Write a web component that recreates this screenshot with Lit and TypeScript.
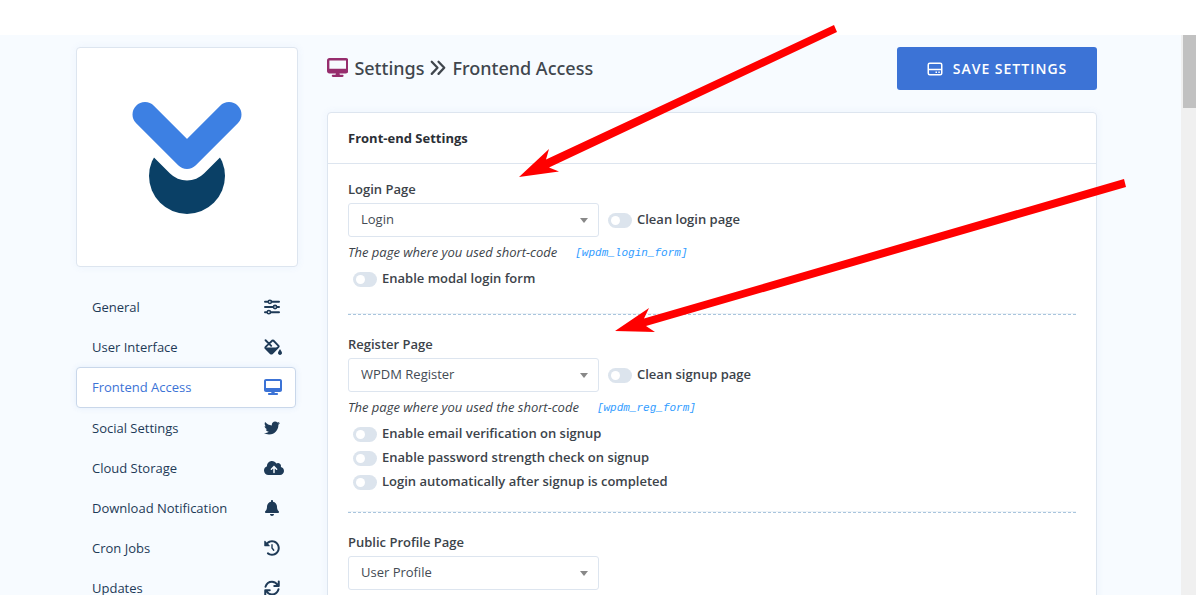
import { LitElement, html, css, svg, nothing } from "lit";
import { customElement, property } from "lit/decorators.js";

const desktop = svg`<path d="M64 0C28.7 0 0 28.7 0 64V352c0 35.3 28.7 64 64 64H240l-10.7 32H160c-17.7 0-32 14.3-32 32s14.3 32 32 32H416c17.7 0 32-14.3 32-32s-14.3-32-32-32H346.7L336 416H512c35.3 0 64-28.7 64-64V64c0-35.3-28.7-64-64-64H64zM512 64V288H64V64H512z"/>`;

const icons: Record<string, { box: string; shape: unknown }> = {
  sliders: {
    box: "0 0 512 512",
    shape: svg`<g fill="none" stroke="currentColor" stroke-width="64" stroke-linecap="round">
      <path d="M32 90H130M246 90H480M32 256H296M412 256H480M32 422H98M214 422H480"/>
      <circle cx="188" cy="90" r="52" stroke-width="50"/><circle cx="354" cy="256" r="52" stroke-width="50"/><circle cx="156" cy="422" r="52" stroke-width="50"/></g>`,
  },
  fill: {
    box: "0 0 576 512",
    shape: svg`<path d="M50 40L230 220M130 180L268 50Q284 38 300 50L464 218Q478 234 464 250L262 456Q236 480 210 456L54 300Q32 276 54 252L110 196" fill="none" stroke="currentColor" stroke-width="60" stroke-linecap="round"/>
      <path d="M40 272H460L262 468Q236 490 210 468L48 306zM512 320c-22 36-64 94-64 130 0 34 28 62 64 62s64-28 64-62c0-36-42-94-64-130z"/>`,
  },
  desktop: { box: "0 0 576 512", shape: desktop },
  twitter: {
    box: "0 0 512 512",
    shape: svg`<path d="M459.37 151.716c.325 4.548.325 9.097.325 13.645 0 138.72-105.583 298.558-298.558 298.558-59.452 0-114.68-17.219-161.137-47.106 8.447.974 16.568 1.299 25.34 1.299 49.055 0 94.213-16.568 130.274-44.832-46.132-.975-84.792-31.188-98.112-72.772 6.498.974 12.995 1.624 19.818 1.624 9.421 0 18.843-1.3 27.614-3.573-48.081-9.747-84.143-51.98-84.143-102.985v-1.299c13.969 7.797 30.214 12.67 47.431 13.319-28.264-18.843-46.781-51.005-46.781-87.391 0-19.492 5.197-37.36 14.294-52.954 51.655 63.675 129.3 105.258 216.365 109.807-1.624-7.797-2.599-15.918-2.599-24.04 0-57.828 46.782-104.934 104.934-104.934 30.213 0 57.502 12.67 76.67 33.137 23.715-4.548 46.456-13.32 66.599-25.34-7.798 24.366-24.366 44.833-46.132 57.827 21.117-2.273 41.584-8.122 60.426-16.243-14.292 20.791-32.161 39.308-52.628 54.253z"/>`,
  },
  cloud: {
    box: "0 0 640 512",
    shape: svg`<path d="M537.6 226.6c4.1-10.7 6.4-22.4 6.4-34.6 0-53-43-96-96-96-19.7 0-38.1 6-53.3 16.2C367 64.2 315.3 32 256 32c-88.4 0-160 71.6-160 160 0 2.7.1 5.4.2 8.1C40.2 219.8 0 273.2 0 336c0 79.5 64.5 144 144 144h368c70.7 0 128-57.3 128-128 0-61.9-44-113.6-102.4-125.4z"/>
      <path d="M320 400V220M236 294L320 210L404 294" fill="none" stroke="#f7fbff" stroke-width="48" stroke-linecap="round"/>`,
  },
  bell: {
    box: "-32 0 512 512",
    shape: svg`<path d="M224 512c35.32 0 63.97-28.65 63.97-64H160.03c0 35.35 28.65 64 63.97 64zm215.39-149.71c-19.32-20.76-55.47-51.99-55.47-154.29 0-77.7-54.48-139.9-127.94-155.16V32c0-17.67-14.32-32-31.98-32s-31.98 14.33-31.98 32v20.84C118.56 68.1 64.08 130.3 64.08 208c0 102.3-36.15 133.53-55.47 154.29-6 6.45-8.66 14.16-8.61 21.71.11 16.4 12.98 32 32.1 32h383.8c19.12 0 32-15.6 32.1-32 .05-7.55-2.61-15.27-8.61-21.71z"/>`,
  },
  history: {
    box: "0 0 512 512",
    shape: svg`<path d="M504 255.531c.253 136.64-111.18 248.372-247.82 248.468-59.015.042-113.223-20.53-155.822-54.911-11.077-8.94-11.905-25.541-1.839-35.607l11.267-11.267c8.609-8.609 22.353-9.551 31.891-1.984C173.062 425.135 212.781 440 256 440c101.705 0 184-82.311 184-184 0-101.705-82.311-184-184-184-48.814 0-93.149 18.969-126.068 49.932l50.754 50.754c10.08 10.08 2.941 27.314-11.313 27.314H24c-8.837 0-16-7.163-16-16V38.627c0-14.254 17.234-21.393 27.314-11.314l49.372 49.372C129.209 34.136 189.552 8 256 8c136.81 0 247.747 110.78 248 247.531z"/>
      <path d="M256 152V256L312 328" fill="none" stroke="currentColor" stroke-width="44" stroke-linecap="round" stroke-linejoin="round"/>`,
  },
  sync: {
    box: "0 0 512 512",
    shape: svg`<g fill="none" stroke="currentColor" stroke-width="64" stroke-linecap="round" stroke-linejoin="round">
      <path d="M48 216C80 110 160 52 256 52C330 52 390 84 440 160M472 44V188H328"/>
      <path d="M464 296C432 402 352 460 256 460C182 460 122 428 72 352M40 468V324H184"/></g>`,
  },
  angles: {
    box: "0 0 512 512",
    shape: svg`<path d="M56 56L240 250L56 444M272 56L456 250L272 444" fill="none" stroke="currentColor" stroke-width="72" stroke-linecap="round" stroke-linejoin="round"/>`,
  },
  drive: {
    box: "0 0 16 14",
    shape: svg`<g fill="none" stroke="currentColor" stroke-width="1.5"><rect x="1.25" y="1.25" width="13.5" height="11.5" rx="1.5"/><path d="M1.25 7.5H14.75"/></g>
      <path d="M8.5 9.5h1.5v1.5h-1.5zM11.3 9.5h1.5v1.5h-1.5z"/>`,
  },
};

@customElement("ui-icon")
export class UiIcon extends LitElement {
  @property() name = "";
  static styles = css`
    :host { display: inline-flex; height: 16px; }
    svg { display: block; height: 100%; fill: currentColor; }
  `;
  render() {
    const icon = icons[this.name];
    return icon ? html`<svg viewBox=${icon.box} aria-hidden="true">${icon.shape}</svg>` : nothing;
  }
}

@customElement("toggle-option")
export class ToggleOption extends LitElement {
  @property() label = "";
  static styles = css`
    :host { display: block; }
    label { display: flex; align-items: center; gap: 5px; height: 24px; font-weight: 600; white-space: nowrap; }
    input {
      appearance: none; flex: none; width: 24px; height: 15px; margin: 0; padding: 3px;
      border-radius: 8px; background: #dce4ed; box-sizing: border-box; cursor: pointer;
    }
    input::before { content: ""; display: block; width: 9px; height: 9px; border-radius: 50%; background: #fff; }
    input:checked { background: #3c73d6; }
    input:checked::before { margin-left: auto; }
    span { padding-bottom: 2px; }
  `;
  render() {
    return html`<label><input type="checkbox" /><span>${this.label}</span></label>`;
  }
}

@customElement("page-picker")
export class PagePicker extends LitElement {
  @property() label = "";
  @property() value = "";
  @property() option = "";
  static styles = css`
    :host { display: block; }
    label { display: block; margin-bottom: 5px; line-height: 18px; font-weight: 600; }
    .row { display: flex; align-items: center; gap: 9px; }
    .box { display: grid; grid-template-columns: 1fr 19px; align-items: center; width: 251px; }
    select {
      grid-area: 1 / 1 / 2 / 3; appearance: none; width: 100%; height: 34px; box-sizing: border-box;
      padding: 0 12px 2px; border: 1px solid #dde5ef; border-radius: 3px; background: #fff;
      font: inherit; color: #444b54;
    }
    .caret {
      grid-area: 1 / 2 / 2 / 3; width: 0; border: solid transparent; border-width: 5px 4px 0;
      border-top-color: #888; pointer-events: none;
    }
  `;
  render() {
    return html`
      <label for="page">${this.label}</label>
      <div class="row">
        <div class="box">
          <select id="page"><option>${this.value}</option></select>
          <span class="caret"></span>
        </div>
        ${this.option ? html`<toggle-option label=${this.option}></toggle-option>` : nothing}
      </div>
    `;
  }
}

const menu = [
  ["General", "sliders"],
  ["User Interface", "fill"],
  ["Frontend Access", "desktop"],
  ["Social Settings", "twitter"],
  ["Cloud Storage", "cloud"],
  ["Download Notification", "bell"],
  ["Cron Jobs", "history"],
  ["Updates", "sync"],
];

@customElement("app-root")
export class AppRoot extends LitElement {
  static styles = css`
    :host {
      display: flex; flex-direction: column; position: relative; height: 100vh; padding-top: 35px;
      box-sizing: border-box; overflow: hidden; background: #fff;
      font: 13px/18px "Open Sans", "Noto Sans", sans-serif; color: #3c434a;
    }
    .page { flex: 1; min-height: 0; display: flex; background: #f7fbff; }
    .content {
      flex: 1; min-width: 0; display: grid; grid-template-columns: 222px minmax(0, 1fr); gap: 29px;
      align-items: start; padding: 12px 84px 0 76px; overflow: hidden;
    }
    .scrollbar { flex: none; width: 13px; padding-left: 2px; background: #f0f0f0; }
    .thumb { height: 73px; background: #c1c1c1; }
    .card { border: 1px solid #dde5ef; border-radius: 4px; background: #fff; box-shadow: 0 0 8px rgba(60, 115, 214, 0.06); }
    .brand { display: flex; justify-content: center; padding: 53px 0 52px; }
    .brand svg { display: block; }
    nav { display: flex; flex-direction: column; width: 220px; margin-top: 20px; }
    .item {
      display: flex; align-items: center; justify-content: space-between; height: 40px; box-sizing: border-box;
      padding: 0 11px 0 15px; border: 1px solid transparent; border-radius: 4px; color: #1e3a57; text-decoration: none;
    }
    .item.active { height: 41px; padding-bottom: 1px; border-color: #c9d7ea; background: #fff; color: #3c73d6; box-shadow: 0 0 6px rgba(60, 115, 214, 0.1); }
    .item ui-icon { width: 20px; }
    header { display: flex; align-items: center; justify-content: space-between; height: 43px; margin-bottom: 22px; }
    h1 { display: flex; align-items: center; gap: 6px; margin: 0; padding-bottom: 2px; font: 500 18px/26px "Noto Sans", sans-serif; color: #40464d; }
    h1 ui-icon { height: 16px; }
    h1 .lead { height: 19px; color: #962d6d; }
    .save {
      display: flex; align-items: center; justify-content: center; gap: 10px; width: 200px; height: 43px; padding: 0;
      border: 0; border-radius: 3px; background: #3c73d6; color: #fff; font: 600 14px/18px "Open Sans", sans-serif;
      letter-spacing: 1px; cursor: pointer;
    }
    .save ui-icon { height: 14px; }
    h2 { margin: 0; padding: 16px 20px; border-bottom: 1px solid #dde5ef; font-size: 13px; line-height: 18px; font-weight: 700; color: #2b2f36; }
    .body { padding: 16px 20px; }
    .help { display: flex; gap: 18px; margin: 6px 0; font-style: italic; }
    code { font: italic 11px/20px "Liberation Mono", monospace; height: 18px; color: #2e9bff; }
    .checks { padding-left: 5px; }
    .checks.single { padding-bottom: 5px; }
    hr { height: 0; margin: 17px 0 20px; border: 0; border-top: 1px solid #edf3f8; border-bottom: 1px dashed #a9c5dd; }
    .notes { position: absolute; top: 0; left: 0; pointer-events: none; fill: #f00; }
  `;

  render() {
    return html`
      <div class="page">
        <div class="content">
          <aside>
            <div class="card brand">
              <svg width="110" height="113" viewBox="0 0 110 113" role="img" aria-label="Download Manager">
                <circle cx="55" cy="75" r="38" fill="#0a4066" />
                <path d="M13 13.500L55 55.500L97 13.500" fill="none" stroke="#fff" stroke-width="48" stroke-linejoin="round" />
                <path d="M13 13.500L55 55.500L97 13.500" fill="none" stroke="#3d80e3" stroke-width="25" stroke-linecap="round" stroke-linejoin="round" />
              </svg>
            </div>
            <nav>
              ${menu.map(
                ([text, icon]) => html`<a href="#" class="item ${icon === "desktop" ? "active" : ""}"
                  ><span>${text}</span><ui-icon name=${icon}></ui-icon
                ></a>`
              )}
            </nav>
          </aside>
          <main>
            <header>
              <h1>
                <ui-icon class="lead" name="desktop"></ui-icon>
                <span>Settings</span><ui-icon name="angles"></ui-icon><span>Frontend Access</span>
              </h1>
              <button class="save" type="button"><ui-icon name="drive"></ui-icon>SAVE SETTINGS</button>
            </header>
            <section class="card">
              <h2>Front-end Settings</h2>
              <div class="body">
                <page-picker label="Login Page" value="Login" option="Clean login page"></page-picker>
                <div class="help"><span>The page where you used short-code</span><code>[wpdm_login_form]</code></div>
                <div class="checks single">
                  <toggle-option label="Enable modal login form"></toggle-option>
                </div>
                <hr />
                <page-picker label="Register Page" value="WPDM Register" option="Clean signup page"></page-picker>
                <div class="help"><span>The page where you used the short-code</span><code>[wpdm_reg_form]</code></div>
                <div class="checks">
                  <toggle-option label="Enable email verification on signup"></toggle-option>
                  <toggle-option label="Enable password strength check on signup"></toggle-option>
                  <toggle-option label="Login automatically after signup is completed"></toggle-option>
                </div>
                <hr />
                <page-picker label="Public Profile Page" value="User Profile"></page-picker>
              </div>
            </section>
          </main>
        </div>
        <div class="scrollbar"><div class="thumb"></div></div>
      </div>
      <svg class="notes" width="1130" height="340" aria-hidden="true">
        <path d="M834 25L546 159.500L549 149L519 177L559 171.500L549 167.500L837 32z" />
        <path d="M1124 179L644 318.500L649 308L615 331L655 332L646 326L1126 187z" />
      </svg>
    `;
  }
}
